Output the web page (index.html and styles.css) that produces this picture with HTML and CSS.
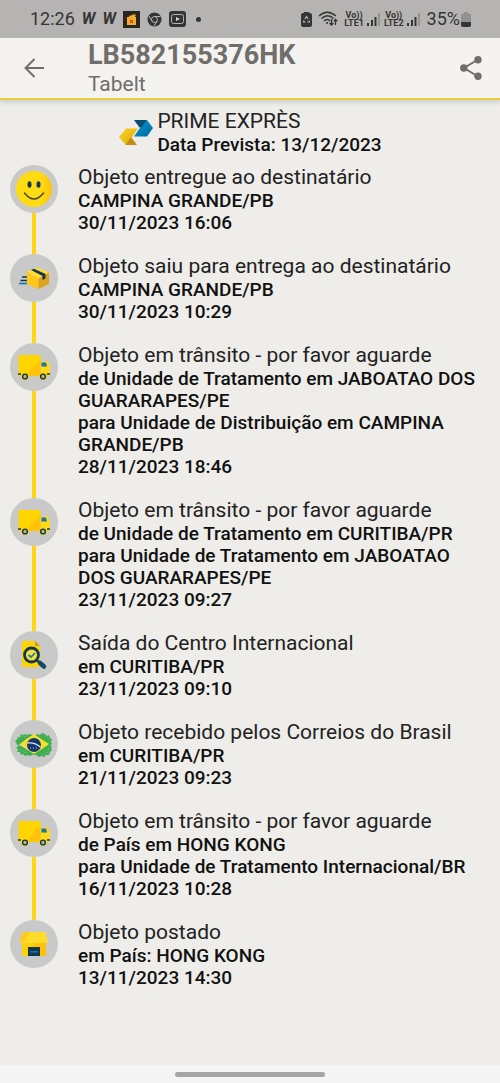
FILE: index.html
```
<!DOCTYPE html>
<html lang="pt-BR">
<head>
<meta charset="utf-8">
<meta name="viewport" content="width=device-width, initial-scale=1">
<title>LB582155376HK</title>
<link rel="stylesheet" href="styles.css">
</head>
<body>
<svg class="defs" aria-hidden="true">
  <symbol id="truck" viewBox="0 0 48 48">
    <path fill="#ffd500" d="M9.500 12h20q1 0 1 1v20h-21q-1 0-1-1V13q0-1 1-1z"/>
    <path fill="#ffc20a" d="M30.500 17v16H15z"/>
    <path fill="#ffd91a" d="M31 18.500h7l2 5V33h-9z"/>
    <path fill="#1477a8" d="M31.500 19.500h4.500l1 4h-5.500z"/>
    <path stroke="#12384f" stroke-width="1.600" d="M8 31h3M37 31h3"/>
    <circle cx="15" cy="33" r="4" fill="#ffd500"/><circle cx="33" cy="33" r="4" fill="#ffd500"/>
    <circle cx="15" cy="33.500" r="2.400" fill="#b9b48a" stroke="#12384f" stroke-width="1.400"/>
    <circle cx="33" cy="33.500" r="2.400" fill="#b9b48a" stroke="#12384f" stroke-width="1.400"/>
  </symbol>
  <symbol id="signal" viewBox="0 0 14 14">
    <path fill="#353535" d="M0 11h2v3H0zM4 8h2v6H4zM7.500 5h2v9h-2z"/><path fill="#949392" d="M11 1h2v13h-2z"/>
  </symbol>
  <linearGradient id="blue" x1="0" y1="0" x2="1" y2="1"><stop stop-color="#00a0d8"/><stop offset="1" stop-color="#00659e"/></linearGradient>
  <linearGradient id="gold" x1="0" y1="0" x2="1" y2="1"><stop stop-color="#f8d226"/><stop offset="1" stop-color="#dfaa08"/></linearGradient>
  <linearGradient id="face" x1="0" y1="0" x2="1" y2="0"><stop offset=".65" stop-color="#ffdc12"/><stop offset="1" stop-color="#ffc20c"/></linearGradient>
</svg>

<div class="status">
  <div class="status-left">
    <span class="clock">12:26</span>
    <span class="w">W</span>
    <span class="w">W</span>
    <svg width="17" height="17" viewBox="0 0 17 17" aria-hidden="true"><path fill="#292521" d="M0 0h17v17H0z"/><path fill="#f8ae2c" d="M4 6h2l1-2 1 1 2-2 1 1 2-1-1 3h1v8H4z"/><path stroke="#c44b21" stroke-width="1.200" d="m7 9 3 3m0-3-3 3"/></svg>
    <svg width="15" height="15" viewBox="0 0 15 15" aria-hidden="true"><circle cx="7.500" cy="7.500" r="7" fill="#353535"/><circle cx="7.500" cy="7.500" r="3" fill="#353535" stroke="#b5b4b2"/><path stroke="#b5b4b2" d="M7.500 4.500h6M5 9.200 2 4M10 9.200 7 14"/></svg>
    <svg width="17" height="16" viewBox="0 0 17 16" aria-hidden="true"><rect width="17" height="16" rx="3" fill="#353535"/><rect x="2.500" y="3.500" width="12" height="9" rx="2" fill="none" stroke="#b5b4b2"/><path fill="#d5d4d2" d="m7 6 4 2-4 2z"/></svg>
    <span class="dot"></span>
  </div>
  <div class="status-right">
    <svg width="11" height="15" viewBox="0 0 11 15" aria-hidden="true"><path fill="#353535" d="M3 0h5v1h1q2 0 2 2v10q0 2-2 2H2q-2 0-2-2V3q0-2 2-2h1z"/><path fill="none" stroke="#b5b4b2" stroke-width="1.200" d="m3.800 7 1.700-2.500L7.200 7M8 8.500 8.500 10H6.500M4.500 10H2.500L3 8.500"/></svg>
    <svg class="wifi" width="20" height="16" viewBox="0 0 20 16" fill="none" stroke="#353535" stroke-width="1.500" aria-hidden="true"><path d="M1 5q8-7.500 17 0M3.500 7.500q6-5.500 12 0M6 10q3.500-3 6 0"/><circle cx="9" cy="12" r="1" fill="#353535" stroke="none"/><path stroke-width="1.300" d="M13.500 8v6m-2-2 2 2 2-2M17.500 14V8.500m-1.800 1.800 1.800-1.800 1.800 1.800"/></svg>
    <span class="lte"><span>Vo))</span><span>LTE1</span></span>
    <svg width="14" height="14"><use href="#signal"/></svg>
    <span class="lte"><span>Vo))</span><span>LTE2</span></span>
    <svg width="14" height="14"><use href="#signal"/></svg>
    <span class="percent">35%</span>
    <svg width="10" height="15" viewBox="0 0 10 15" aria-hidden="true"><path fill="#929190" d="M3 0h4v1.500h1q2 0 2 2V13q0 2-2 2H2q-2 0-2-2V3.500q0-2 2-2h1z"/><path fill="#353535" d="M0 10h10v3q0 2-2 2H2q-2 0-2-2z"/></svg>
  </div>
</div>

<header class="bar">
  <button class="icon-button" type="button" aria-label="Voltar">
    <svg width="20" height="20" viewBox="0 0 20 20" fill="none" stroke="#6f6e6d" stroke-width="2" aria-hidden="true"><path d="M10.500 1 1.500 10l9 9M1.500 10H20"/></svg>
  </button>
  <div class="heading">
    <h1>LB582155376HK</h1>
    <p>Tabelt</p>
  </div>
  <button class="icon-button" type="button" aria-label="Compartilhar">
    <svg width="22" height="24" viewBox="0 0 22 24" fill="#6f6e6d" aria-hidden="true"><path stroke="#6f6e6d" stroke-width="2" fill="none" d="M18 3.500 4 12l14 8.500"/><circle cx="18" cy="3.800" r="3.700"/><circle cx="3.800" cy="12" r="3.700"/><circle cx="18" cy="20.200" r="3.700"/></svg>
  </button>
</header>

<main>
  <section class="service">
    <svg width="36" height="28" viewBox="0 0 36 28" aria-hidden="true"><path fill="url(#gold)" d="M8 9.500h12l-6 8.500-3 5-3 3-7-8z"/><path fill="#c78b13" d="M7.500 26l5.500-8 6 8z"/><path fill="url(#blue)" d="M29 1l6 8-6 8.500H16L22 9z"/><path fill="#064d78" d="M16 1h13l-5.500 7.500h-2z"/></svg>
    <div>
      <h2>PRIME EXPRÈS</h2>
      <p>Data Prevista: 13/12/2023</p>
    </div>
  </section>

  <ol class="events">
    <li>
      <span class="badge"><svg viewBox="0 0 48 48" aria-hidden="true"><circle cx="24" cy="24" r="18" fill="url(#face)"/><ellipse cx="19.500" cy="19.500" rx="2" ry="3.300" fill="#12384f"/><ellipse cx="28.500" cy="19.500" rx="2" ry="3.300" fill="#12384f"/><path d="M14.500 28q9.500 12 19 0" fill="none" stroke="#4a4720" stroke-width="1.500" stroke-linecap="round"/></svg></span>
      <div><h3>Objeto entregue ao destinatário</h3><p>CAMPINA GRANDE/PB</p><p>30/11/2023 16:06</p></div>
    </li>
    <li>
      <span class="badge"><svg viewBox="0 0 48 48" aria-hidden="true"><path fill="#ffdc35" d="m17 17.500 10-4 12 5-10.500 6z"/><path fill="#ffc819" d="m17 17.500 11.500 7V35L17 30z"/><path fill="#dfa31b" d="m28.500 24.500 10.500-6V30l-10.500 5z"/><path fill="#12384f" d="m21 16 3-1.300L35.500 20v4.500l-3 1.500v-4z"/><path stroke="#12384f" stroke-width="1.500" d="M12 23h5M10.500 26.500H17"/><path stroke="#1477a8" stroke-width="1.600" d="M9 29.500h8"/></svg></span>
      <div><h3>Objeto saiu para entrega ao destinatário</h3><p>CAMPINA GRANDE/PB</p><p>30/11/2023 10:29</p></div>
    </li>
    <li>
      <span class="badge"><svg><use href="#truck"/></svg></span>
      <div><h3>Objeto em trânsito - por favor aguarde</h3><p>de Unidade de Tratamento em JABOATAO DOS GUARARAPES/PE</p><p>para Unidade de Distribuição em CAMPINA GRANDE/PB</p><p>28/11/2023 18:46</p></div>
    </li>
    <li>
      <span class="badge"><svg><use href="#truck"/></svg></span>
      <div><h3>Objeto em trânsito - por favor aguarde</h3><p>de Unidade de Tratamento em CURITIBA/PR</p><p>para Unidade de Tratamento em JABOATAO DOS GUARARAPES/PE</p><p>23/11/2023 09:27</p></div>
    </li>
    <li>
      <span class="badge"><svg viewBox="0 0 48 48" aria-hidden="true"><path fill="#ffd500" d="M12 10h13l5 5v21H12z"/><path fill="#c9983c" d="M25 10v5h5z"/><circle cx="21.500" cy="24" r="7" fill="#f4df43" stroke="#12384f" stroke-width="2.800"/><path d="m18.500 24 2.500 2 4-4" fill="none" stroke="#1477a8" stroke-width="1.700"/><path d="m27 29.500 3 2.500" stroke="#12384f" stroke-width="2.500"/><path d="m30 32 4 3.500" stroke="#12486b" stroke-width="4.500" stroke-linecap="round"/></svg></span>
      <div><h3>Saída do Centro Internacional</h3><p>em CURITIBA/PR</p><p>23/11/2023 09:10</p></div>
    </li>
    <li>
      <span class="badge"><svg viewBox="0 0 48 48" aria-hidden="true"><path fill="#3fae50" d="m6 20 2-1-1-2 3 0 1-3 2 1 2-1 2 1 3-1 3 1-6 6-9 4-2-1 1-1-2-1zM27 14l3 1 2-2 3 1 2 2 2-1 1 3 2 1-1 3 1 2-2 2-7-4-8-5zM9 25l9 5 6 4-4 2-3-1-2 1-2-2-2 1-1-3-3 0 1-3-2-1zM40 24l2 2-1 2 1 2-2 2-1 3-3 0-2 2-3-1-3 1-1-2-3 0-2-2 8-4z"/><path fill="none" stroke="#8fd09b" stroke-dasharray="1 2" d="M9 18l3-2 5 1M34 16l5 2 1 4M10 29l4 3 4 1M32 35l6-3 1-4"/><path fill="#f3df2c" d="M24 14q7 5 15 10-8 6-15 10-7-4-14-10 7-6 14-10z"/><circle cx="24" cy="25" r="7" fill="#16366f"/><path d="M17.500 23q7-1 13 4" fill="none" stroke="#dce5ec" stroke-width="1.400"/><path stroke="#b9c9d7" stroke-width="1" stroke-dasharray="1 2" d="M20 28h7"/></svg></span>
      <div><h3>Objeto recebido pelos Correios do Brasil</h3><p>em CURITIBA/PR</p><p>21/11/2023 09:23</p></div>
    </li>
    <li>
      <span class="badge"><svg><use href="#truck"/></svg></span>
      <div><h3>Objeto em trânsito - por favor aguarde</h3><p>de País em HONG KONG</p><p>para Unidade de Tratamento Internacional/BR</p><p>16/11/2023 10:28</p></div>
    </li>
    <li>
      <span class="badge"><svg viewBox="0 0 48 48" aria-hidden="true"><path fill="#ffcf0a" d="M12 22h24v14H12z"/><path fill="#ffc20a" d="M24 22h12v14H24z"/><path fill="#ffdc2b" d="M13 12h22l3 9q0 2-3 2H13q-3 0-3-2z"/><path fill="#ffc81c" d="m13 12 7 0-7 10q-3 0-3-2z"/><path fill="#12384f" d="M18 27h12v9H18z"/><path fill="#1477a8" d="M20 31h8v1.500h-8z"/></svg></span>
      <div><h3>Objeto postado</h3><p>em País: HONG KONG</p><p>13/11/2023 14:30</p></div>
    </li>
  </ol>
</main>

<footer class="nav"><span class="handle"></span></footer>
</body>
</html>
```
FILE: styles.css
```
* { box-sizing: border-box; }
body {
  margin: 0;
  min-height: 100vh;
  display: flex;
  flex-direction: column;
  background: #eeede9;
  color: #222;
  font-family: Roboto, "Liberation Sans", sans-serif;
}
h1, h2, h3, p, ol { margin: 0; padding: 0; }
svg { display: block; flex: none; }
.defs { position: absolute; width: 0; height: 0; }

.status {
  height: 38px;
  padding: 0 29px 0 30px;
  display: flex;
  justify-content: space-between;
  align-items: center;
  background: #b5b4b2;
  color: #353535;
}
.status-left, .status-right { display: flex; align-items: center; }
.status-left { gap: 7px; }
.status-right { gap: 3px; }
.clock, .percent { font-size: 18px; line-height: 20px; }
.w { font-size: 16px; line-height: 20px; font-weight: 700; font-style: italic; }
.dot { width: 5px; height: 5px; margin-left: 3px; border-radius: 50%; background: #353535; }
.wifi { margin: 0 3px; }
.lte { display: flex; flex-direction: column; align-items: center; font-size: 9px; line-height: 8px; font-weight: 700; }
.percent { margin-left: 3px; }
.percent + svg { margin-left: -2px; }

.bar {
  height: 62px;
  padding: 0 17px 0 22px;
  display: flex;
  align-items: center;
  background: #f4f3ef;
  border-bottom: 2px solid #edcb3f;
  box-shadow: 0 2px 5px #c4c9c9;
}
.icon-button {
  display: grid;
  place-items: center;
  width: 24px;
  height: 24px;
  padding: 0;
  border: 0;
  background: none;
}
.heading { flex: 1; margin-left: 42px; color: #6f6e6d; }
.heading h1 { font-size: 27px; line-height: 32px; font-weight: 700; }
.heading p { font-size: 21px; line-height: 26px; }

main { flex: 1; }
.service {
  display: flex;
  justify-content: center;
  align-items: center;
  gap: 3px;
  padding: 9px 0;
}
h2, h3 { font-size: 21px; line-height: 25px; font-weight: 400; }
.service p, .events p { font-size: 19px; line-height: 22px; font-weight: 500; color: #111; }

.events { list-style: none; padding: 0 20px 0 10px; }
.events li {
  display: grid;
  grid-template-columns: 48px 1fr;
  column-gap: 20px;
  padding-bottom: 20px;
  background: linear-gradient(#ffd51a, #ffd51a) 22px 0 / 4px 100% no-repeat;
}
.events li:last-child { background: none; }
.badge { width: 48px; height: 48px; border-radius: 50%; background: #c9c9c9; }
.badge svg { width: 48px; height: 48px; }

.nav {
  height: 18px;
  display: grid;
  place-items: center;
  background: #f5f5f5;
}
.handle { width: 30%; height: 5px; border-radius: 3px; background: #a5a5a5; }
```
